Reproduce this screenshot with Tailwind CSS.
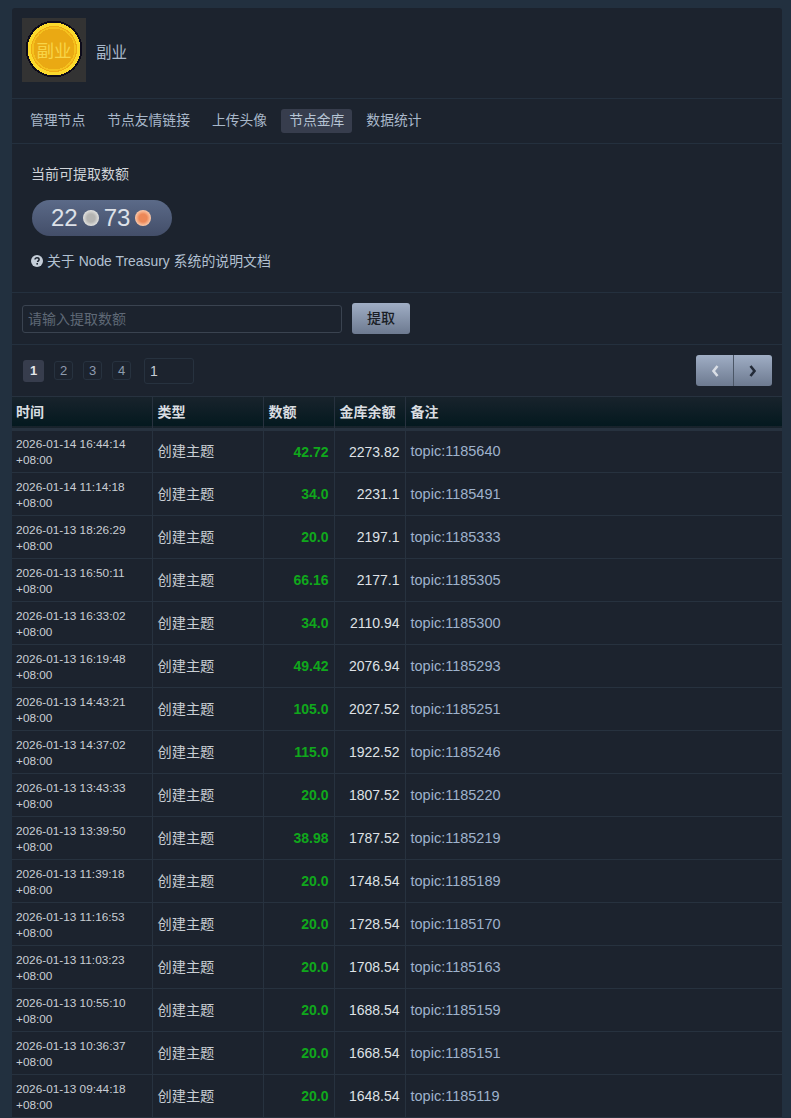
<!DOCTYPE html>
<html lang="zh"><head><meta charset="utf-8">
<script src="https://cdn.jsdelivr.net/npm/@tailwindcss/browser@4"></script>
<title>节点金库</title></head>
<body class="bg-[#22303f] h-[1118px] overflow-hidden font-['Liberation_Sans','Noto_Sans_CJK_SC',sans-serif] text-[14px] text-[#d5d9dd]">
<main class="ml-3 mr-[9px] pt-2">
<div class="bg-[#1c232e] rounded-t-[3px]">
  <header class="h-[91px] flex items-center px-2.5 border-b border-[#24303e]">
    <svg width="64" height="64" viewBox="0 0 64 64" shape-rendering="crispEdges" class="shrink-0 self-start mt-2.5">
      <rect width="64" height="64" fill="#333333"/>
      <circle cx="32" cy="31" r="28.5" fill="#0d0b1a"/>
      <circle cx="32" cy="31" r="26.5" fill="#fbd92c"/>
      <circle cx="32" cy="31" r="23" fill="#f0ab14"/>
      <circle cx="32" cy="31" r="22" fill="#f5c21e"/>
      <circle cx="32" cy="31" r="20.5" fill="#eaa913"/>
      <text x="32" y="38.5" text-anchor="middle" font-size="17.5" fill="#f8d548" shape-rendering="auto" font-family="'Noto Sans CJK SC',sans-serif">副业</text>
    </svg>
    <span class="ml-2.5 text-[#a9b8ca] text-[15.5px]">副业</span>
  </header>
  <nav class="h-[45px] flex items-center gap-[6px] px-2.5 border-b border-[#24303e] text-[#a9b8ca] text-[13.8px]">
    <a class="px-2 py-[3px] leading-[18px] rounded-[3px]">管理节点</a>
    <a class="px-2 py-[3px] leading-[18px] rounded-[3px]">节点友情链接</a>
    <a class="px-2 py-[3px] leading-[18px] rounded-[3px]">上传头像</a>
    <a class="px-2 py-[3px] leading-[18px] rounded-[3px] bg-[#373d4d] text-[#b6c4d4]">节点金库</a>
    <a class="px-2 py-[3px] leading-[18px] rounded-[3px]">数据统计</a>
  </nav>
  <section class="h-[149px] px-5 pt-[21px] border-b border-[#24303e]">
    <div class="leading-[18px] text-[14px] -ml-[1px] text-[#d0d4d9]">当前可提取数额</div>
    <div class="mt-[17px] w-[140px] h-9 rounded-[18px] bg-gradient-to-b from-[#5b6a88] to-[#434e69] flex items-center pl-[19px] text-[24px] text-[#dde1e8]">
      <span>22</span>
      <span class="ml-[5px] size-4 rounded-full bg-radial from-[#b4b4b2] from-35% to-[#e2e2e0] to-70%"></span>
      <span class="ml-[5px]">73</span>
      <span class="ml-[5px] size-4 rounded-full bg-radial from-[#ec8858] from-35% to-[#fac9aa] to-70%"></span>
    </div>
    <p class="mt-4 flex items-center gap-[3px] text-[#b2c0d1] text-[13.9px] leading-[18px]">
      <svg width="12" height="12" viewBox="0 0 12 12" class="-ml-[1px]"><circle cx="6" cy="6" r="6" fill="#c5ced9"/><path d="M4 4.6C4 3.4 5 2.8 6 2.8 7.2 2.8 8.1 3.5 8.1 4.5 8.1 5.8 6.6 5.8 6.6 7" fill="none" stroke="#1c232e" stroke-width="1.5"/><rect x="5.4" y="8" width="1.6" height="1.6" fill="#1c232e"/></svg>
      <span class="ml-[1px]">关于 Node Treasury 系统的说明文档</span>
    </p>
  </section>
  <section class="h-[52px] flex items-center px-2.5 border-b border-[#24303e]">
    <input class="w-[320px] h-7 px-[5px] bg-[#1c232e] border border-[#3a4350] rounded-[3px] text-[14px] placeholder:text-[#5f6976] outline-none mt-[1px]" placeholder="请输入提取数额">
    <button class="ml-2.5 w-[58px] h-[31px] rounded-[3px] bg-gradient-to-b from-[#a0aec5] to-[#6d7a90] text-[#1a1e26] text-[14px] font-medium">提取</button>
  </section>
  <section class="h-[52px] flex items-center pl-[11px] pr-2.5 border-b border-[#27323f]">
    <a class="w-[21px] h-[22px] flex items-center justify-center rounded-[3px] bg-[#373d4d] text-[#e4e7eb] font-bold text-[13px]">1</a>
    <a class="ml-[10px] w-[19px] h-[19px] flex items-center justify-center rounded-[3px] border border-[#27323f] text-[#8e9cae] text-[13px]">2</a>
    <a class="ml-[10px] w-[19px] h-[19px] flex items-center justify-center rounded-[3px] border border-[#27323f] text-[#8e9cae] text-[13px]">3</a>
    <a class="ml-[10px] w-[19px] h-[19px] flex items-center justify-center rounded-[3px] border border-[#27323f] text-[#8e9cae] text-[13px]">4</a>
    <div class="ml-[13px] w-[50px] h-[26px] pl-[5px] rounded-[3px] border border-[#27323f] text-[#c5ccd4] text-[14px] leading-[24px]">1</div>
    <div class="ml-auto flex h-[31px] rounded-[3px] overflow-hidden bg-gradient-to-b from-[#a0aec5] to-[#6d7a90]">
      <span class="w-[38px] flex items-center justify-center border-r border-[#4b5666]">
        <svg width="8" height="12" viewBox="0 0 8 12"><path d="M6.5 1 2.5 6l4 5" fill="none" stroke="#d9dee5" stroke-width="2.6"/></svg>
      </span>
      <span class="w-[38px] flex items-center justify-center">
        <svg width="8" height="12" viewBox="0 0 8 12"><path d="M1.5 1l4 5-4 5" fill="none" stroke="#232b38" stroke-width="2.6"/></svg>
      </span>
    </div>
  </section>
  <table class="w-full table-fixed border-collapse">
    <colgroup><col class="w-[140px]"><col class="w-[111px]"><col class="w-[71px]"><col class="w-[71px]"><col></colgroup>
    <thead>
      <tr class="h-[32px] bg-gradient-to-b from-[#18232c] to-[#04191f] border-b-[3px] border-[#27323f] text-[#d9dde1] text-left text-[14px]">
        <th class="pl-1 font-bold border-r border-[#27323f]">时间</th>
        <th class="pl-[5px] font-bold border-r border-[#27323f]">类型</th>
        <th class="pl-[5px] font-bold border-r border-[#27323f]">数额</th>
        <th class="pl-[5px] font-bold border-r border-[#27323f]">金库余额</th>
        <th class="pl-[5px] font-bold">备注</th>
      </tr>
    </thead>
    <tbody class="[&_td]:pt-[2px]">
      <tr class="h-[43px] border-b border-[#27323f]"><td class="pl-1 border-r border-[#27323f] text-[11.8px] leading-[16px] text-[#c9ced4]">2026-01-14 16:44:14<br>+08:00</td><td class="pl-[5px] border-r border-[#27323f] text-[14.2px] text-[#c9ced4]">创建主题</td><td class="pr-[5px] border-r border-[#27323f] text-right font-bold text-[#10a81c]">42.72</td><td class="pr-[5px] border-r border-[#27323f] text-right text-[#dfe2e6]">2273.82</td><td class="pl-[5px] text-[14.5px] text-[#9fb2cc]">topic:1185640</td></tr>
      <tr class="h-[43px] border-b border-[#27323f]"><td class="pl-1 border-r border-[#27323f] text-[11.8px] leading-[16px] text-[#c9ced4]">2026-01-14 11:14:18<br>+08:00</td><td class="pl-[5px] border-r border-[#27323f] text-[14.2px] text-[#c9ced4]">创建主题</td><td class="pr-[5px] border-r border-[#27323f] text-right font-bold text-[#10a81c]">34.0</td><td class="pr-[5px] border-r border-[#27323f] text-right text-[#dfe2e6]">2231.1</td><td class="pl-[5px] text-[14.5px] text-[#9fb2cc]">topic:1185491</td></tr>
      <tr class="h-[43px] border-b border-[#27323f]"><td class="pl-1 border-r border-[#27323f] text-[11.8px] leading-[16px] text-[#c9ced4]">2026-01-13 18:26:29<br>+08:00</td><td class="pl-[5px] border-r border-[#27323f] text-[14.2px] text-[#c9ced4]">创建主题</td><td class="pr-[5px] border-r border-[#27323f] text-right font-bold text-[#10a81c]">20.0</td><td class="pr-[5px] border-r border-[#27323f] text-right text-[#dfe2e6]">2197.1</td><td class="pl-[5px] text-[14.5px] text-[#9fb2cc]">topic:1185333</td></tr>
      <tr class="h-[43px] border-b border-[#27323f]"><td class="pl-1 border-r border-[#27323f] text-[11.8px] leading-[16px] text-[#c9ced4]">2026-01-13 16:50:11<br>+08:00</td><td class="pl-[5px] border-r border-[#27323f] text-[14.2px] text-[#c9ced4]">创建主题</td><td class="pr-[5px] border-r border-[#27323f] text-right font-bold text-[#10a81c]">66.16</td><td class="pr-[5px] border-r border-[#27323f] text-right text-[#dfe2e6]">2177.1</td><td class="pl-[5px] text-[14.5px] text-[#9fb2cc]">topic:1185305</td></tr>
      <tr class="h-[43px] border-b border-[#27323f]"><td class="pl-1 border-r border-[#27323f] text-[11.8px] leading-[16px] text-[#c9ced4]">2026-01-13 16:33:02<br>+08:00</td><td class="pl-[5px] border-r border-[#27323f] text-[14.2px] text-[#c9ced4]">创建主题</td><td class="pr-[5px] border-r border-[#27323f] text-right font-bold text-[#10a81c]">34.0</td><td class="pr-[5px] border-r border-[#27323f] text-right text-[#dfe2e6]">2110.94</td><td class="pl-[5px] text-[14.5px] text-[#9fb2cc]">topic:1185300</td></tr>
      <tr class="h-[43px] border-b border-[#27323f]"><td class="pl-1 border-r border-[#27323f] text-[11.8px] leading-[16px] text-[#c9ced4]">2026-01-13 16:19:48<br>+08:00</td><td class="pl-[5px] border-r border-[#27323f] text-[14.2px] text-[#c9ced4]">创建主题</td><td class="pr-[5px] border-r border-[#27323f] text-right font-bold text-[#10a81c]">49.42</td><td class="pr-[5px] border-r border-[#27323f] text-right text-[#dfe2e6]">2076.94</td><td class="pl-[5px] text-[14.5px] text-[#9fb2cc]">topic:1185293</td></tr>
      <tr class="h-[43px] border-b border-[#27323f]"><td class="pl-1 border-r border-[#27323f] text-[11.8px] leading-[16px] text-[#c9ced4]">2026-01-13 14:43:21<br>+08:00</td><td class="pl-[5px] border-r border-[#27323f] text-[14.2px] text-[#c9ced4]">创建主题</td><td class="pr-[5px] border-r border-[#27323f] text-right font-bold text-[#10a81c]">105.0</td><td class="pr-[5px] border-r border-[#27323f] text-right text-[#dfe2e6]">2027.52</td><td class="pl-[5px] text-[14.5px] text-[#9fb2cc]">topic:1185251</td></tr>
      <tr class="h-[43px] border-b border-[#27323f]"><td class="pl-1 border-r border-[#27323f] text-[11.8px] leading-[16px] text-[#c9ced4]">2026-01-13 14:37:02<br>+08:00</td><td class="pl-[5px] border-r border-[#27323f] text-[14.2px] text-[#c9ced4]">创建主题</td><td class="pr-[5px] border-r border-[#27323f] text-right font-bold text-[#10a81c]">115.0</td><td class="pr-[5px] border-r border-[#27323f] text-right text-[#dfe2e6]">1922.52</td><td class="pl-[5px] text-[14.5px] text-[#9fb2cc]">topic:1185246</td></tr>
      <tr class="h-[43px] border-b border-[#27323f]"><td class="pl-1 border-r border-[#27323f] text-[11.8px] leading-[16px] text-[#c9ced4]">2026-01-13 13:43:33<br>+08:00</td><td class="pl-[5px] border-r border-[#27323f] text-[14.2px] text-[#c9ced4]">创建主题</td><td class="pr-[5px] border-r border-[#27323f] text-right font-bold text-[#10a81c]">20.0</td><td class="pr-[5px] border-r border-[#27323f] text-right text-[#dfe2e6]">1807.52</td><td class="pl-[5px] text-[14.5px] text-[#9fb2cc]">topic:1185220</td></tr>
      <tr class="h-[43px] border-b border-[#27323f]"><td class="pl-1 border-r border-[#27323f] text-[11.8px] leading-[16px] text-[#c9ced4]">2026-01-13 13:39:50<br>+08:00</td><td class="pl-[5px] border-r border-[#27323f] text-[14.2px] text-[#c9ced4]">创建主题</td><td class="pr-[5px] border-r border-[#27323f] text-right font-bold text-[#10a81c]">38.98</td><td class="pr-[5px] border-r border-[#27323f] text-right text-[#dfe2e6]">1787.52</td><td class="pl-[5px] text-[14.5px] text-[#9fb2cc]">topic:1185219</td></tr>
      <tr class="h-[43px] border-b border-[#27323f]"><td class="pl-1 border-r border-[#27323f] text-[11.8px] leading-[16px] text-[#c9ced4]">2026-01-13 11:39:18<br>+08:00</td><td class="pl-[5px] border-r border-[#27323f] text-[14.2px] text-[#c9ced4]">创建主题</td><td class="pr-[5px] border-r border-[#27323f] text-right font-bold text-[#10a81c]">20.0</td><td class="pr-[5px] border-r border-[#27323f] text-right text-[#dfe2e6]">1748.54</td><td class="pl-[5px] text-[14.5px] text-[#9fb2cc]">topic:1185189</td></tr>
      <tr class="h-[43px] border-b border-[#27323f]"><td class="pl-1 border-r border-[#27323f] text-[11.8px] leading-[16px] text-[#c9ced4]">2026-01-13 11:16:53<br>+08:00</td><td class="pl-[5px] border-r border-[#27323f] text-[14.2px] text-[#c9ced4]">创建主题</td><td class="pr-[5px] border-r border-[#27323f] text-right font-bold text-[#10a81c]">20.0</td><td class="pr-[5px] border-r border-[#27323f] text-right text-[#dfe2e6]">1728.54</td><td class="pl-[5px] text-[14.5px] text-[#9fb2cc]">topic:1185170</td></tr>
      <tr class="h-[43px] border-b border-[#27323f]"><td class="pl-1 border-r border-[#27323f] text-[11.8px] leading-[16px] text-[#c9ced4]">2026-01-13 11:03:23<br>+08:00</td><td class="pl-[5px] border-r border-[#27323f] text-[14.2px] text-[#c9ced4]">创建主题</td><td class="pr-[5px] border-r border-[#27323f] text-right font-bold text-[#10a81c]">20.0</td><td class="pr-[5px] border-r border-[#27323f] text-right text-[#dfe2e6]">1708.54</td><td class="pl-[5px] text-[14.5px] text-[#9fb2cc]">topic:1185163</td></tr>
      <tr class="h-[43px] border-b border-[#27323f]"><td class="pl-1 border-r border-[#27323f] text-[11.8px] leading-[16px] text-[#c9ced4]">2026-01-13 10:55:10<br>+08:00</td><td class="pl-[5px] border-r border-[#27323f] text-[14.2px] text-[#c9ced4]">创建主题</td><td class="pr-[5px] border-r border-[#27323f] text-right font-bold text-[#10a81c]">20.0</td><td class="pr-[5px] border-r border-[#27323f] text-right text-[#dfe2e6]">1688.54</td><td class="pl-[5px] text-[14.5px] text-[#9fb2cc]">topic:1185159</td></tr>
      <tr class="h-[43px] border-b border-[#27323f]"><td class="pl-1 border-r border-[#27323f] text-[11.8px] leading-[16px] text-[#c9ced4]">2026-01-13 10:36:37<br>+08:00</td><td class="pl-[5px] border-r border-[#27323f] text-[14.2px] text-[#c9ced4]">创建主题</td><td class="pr-[5px] border-r border-[#27323f] text-right font-bold text-[#10a81c]">20.0</td><td class="pr-[5px] border-r border-[#27323f] text-right text-[#dfe2e6]">1668.54</td><td class="pl-[5px] text-[14.5px] text-[#9fb2cc]">topic:1185151</td></tr>
      <tr class="h-[43px] border-b border-[#27323f]"><td class="pl-1 border-r border-[#27323f] text-[11.8px] leading-[16px] text-[#c9ced4]">2026-01-13 09:44:18<br>+08:00</td><td class="pl-[5px] border-r border-[#27323f] text-[14.2px] text-[#c9ced4]">创建主题</td><td class="pr-[5px] border-r border-[#27323f] text-right font-bold text-[#10a81c]">20.0</td><td class="pr-[5px] border-r border-[#27323f] text-right text-[#dfe2e6]">1648.54</td><td class="pl-[5px] text-[14.5px] text-[#9fb2cc]">topic:1185119</td></tr>
    </tbody>
  </table>
</div>
</main>
</body></html>
